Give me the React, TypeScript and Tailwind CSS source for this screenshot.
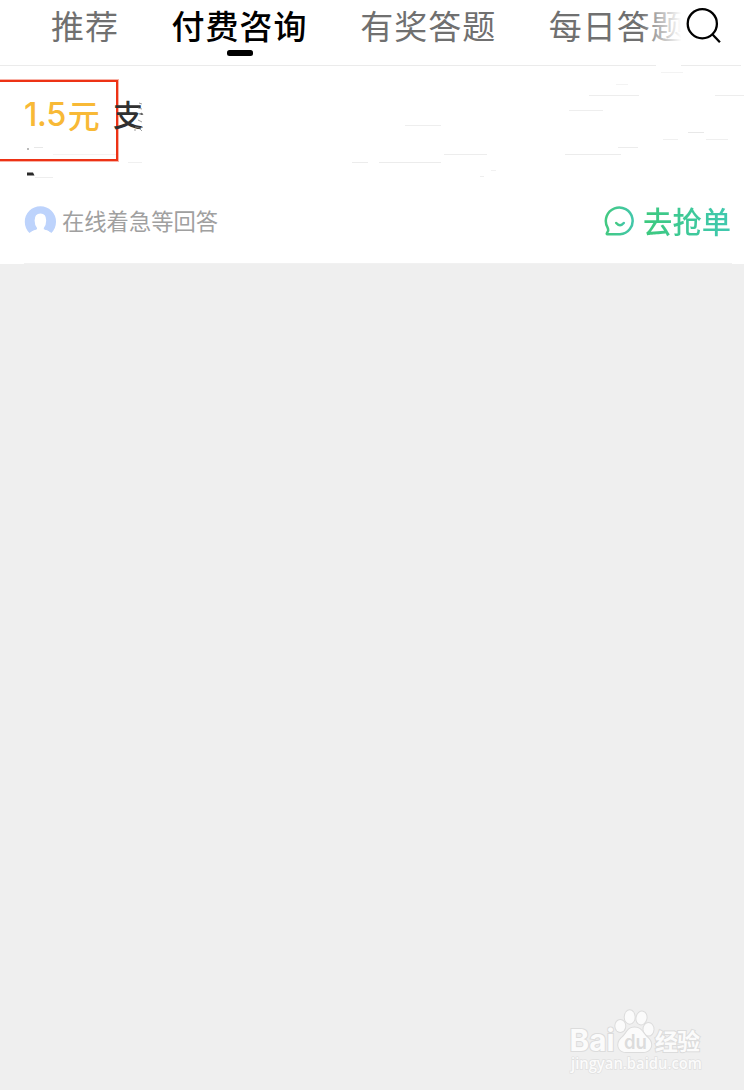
const tabs = ['推荐', '付费咨询', '有奖答题', '每日答题'];

// Faint dashes scattered over the question: [x, y, width, colour]
const dashes: [number, number, number, string][] = [
  [661, 72, 22, '#f3f3f3'],
  [616, 84, 12, '#f3f3f3'],
  [589, 95, 50, '#ededed'],
  [715, 95, 29, '#ededed'],
  [569, 110, 34, '#eeeeee'],
  [405, 125, 36, '#eeeeee'],
  [688, 132, 16, '#e8e8e8'],
  [663, 139, 15, '#f0f0f0'],
  [706, 139, 22, '#efefef'],
  [618, 147, 20, '#ececec'],
  [444, 154, 43, '#ededed'],
  [565, 154, 56, '#ececec'],
  [352, 162, 16, '#ececec'],
  [379, 162, 62, '#ececec'],
  [480, 176, 4, '#eeeeee'],
  [491, 170, 5, '#f1f1f1'],
  [128, 162, 14, '#f0f0f0'],
  [34, 147, 9, '#e8e8e8'],
  [53, 154, 63, '#f3f3f3'],
  [35, 177, 18, '#eeeeee'],
];

function Tabs() {
  return (
    <header className="relative flex h-[66px] shrink-0 overflow-hidden pl-[51px] pt-[3px]">
      <nav className="flex gap-[52.6px] whitespace-nowrap text-[33px] leading-[44px] tracking-[1px] text-[#707070]">
        {tabs.map((tab) => (
          <div
            key={tab}
            className={
              tab === '付费咨询'
                ? 'flex flex-col items-center font-medium text-black'
                : 'flex flex-col items-center'
            }
          >
            <span>{tab}</span>
            {tab === '付费咨询' && <span className="mt-[3px] h-1.5 w-[26px] rounded-[2.5px] bg-black" />}
          </div>
        ))}
      </nav>
      <div className="absolute right-0 top-0 flex h-[64px] w-[104px] bg-linear-to-r from-white/0 from-0% via-white via-40% to-white">
        <svg className="ml-[46px] mt-[7px]" width="36" height="38" viewBox="0 0 36 38" fill="none" stroke="#000" strokeWidth="2.3">
          <circle cx="16.3" cy="16.7" r="14.6" />
          <path d="M26.1 27 33.9 35.2" />
        </svg>
      </div>
      <svg className="absolute left-0 top-[65px]" width="744" height="1">
        <path d="M0 .5H656M681 .5H741" stroke="#ebebeb" />
      </svg>
    </header>
  );
}

function Question() {
  return (
    <article className="relative h-[198px] shrink-0 bg-white">
      <h1 className="flex h-[96px] items-start text-[30px] leading-[40px]">
        <div className="mt-[14px] flex h-[81px] w-[118px] border-2 border-l-0 border-[#ed3215] pl-[24px] pt-[13px] font-medium text-[#f8b936] shadow-[0_0_0_1px_#ed321560]">
          <span className="mr-[2px] font-['Inter','Noto_Sans_CJK_SC',sans-serif] text-[32.5px] tracking-[-0.4px]">1.5</span>
          <span className="-mt-px text-[32px]">元</span>
        </div>
        <span className="-ml-[5px] mt-[27px] font-medium text-[#303030]">支</span>
      </h1>
      <footer className="mt-[34px] flex h-[50px] items-center justify-between pl-6 pr-[13px]">
        <div className="flex items-center">
          <svg className="-mt-[3px]" width="32" height="32" viewBox="0 0 32 32">
            <path d="M5.5 29A15.6 15.6 0 1 1 27.3 29Q24 26 20 25.5H12.5Q8 26.5 5.5 29Z" fill="#bdd3fc" />
            <path d="M6 29Q8 26.7 13 25.5V24Q10.6 21 10.6 16.5Q10.6 9.5 16.5 9.5Q22.2 9.5 22.2 16.5Q22.2 21 19.8 24V25.5Q24 26 27 29L24 32H8Z" fill="#fff" />
          </svg>
          <span className="-mt-[3px] ml-[6px] text-[22.3px] leading-[30px] text-[#a0a0a0]">在线着急等回答</span>
        </div>
        <button className="flex items-center">
          <svg width="32" height="32" viewBox="0 0 32 32" fill="none" stroke="url(#face)" strokeWidth="2.5" strokeLinecap="round" strokeLinejoin="round">
            <defs>
              <linearGradient id="face" x2="1">
                <stop stopColor="#43c982" />
                <stop offset="1" stopColor="#42c7a9" />
              </linearGradient>
            </defs>
            <path d="M3.5 22.4A13.4 13.4 0 1 1 16 29.3H3.4Q2.3 29.3 3 28L4.2 25.7Q4.3 24 3.5 22.4Z" />
            <path d="M12.2 18Q16 22.5 19.8 18" />
          </svg>
          <span className="-mt-[3px] ml-[7px] bg-linear-to-r from-[#3dc97d] to-[#40c8b0] bg-clip-text text-[29.3px] font-medium leading-[40px] text-transparent">去抢单</span>
        </button>
      </footer>
      <svg className="pointer-events-none absolute left-0 -top-[66px]" width="744" height="264">
        {dashes.map(([x, y, w, color]) => (
          <rect key={`${x}-${y}`} x={x} y={y} width={w} height="1" fill={color} />
        ))}
        <path d="M27 172.5h6l1.5 3h-7.5z" fill="#292929" />
        <path d="M27 149h2" stroke="#777" />
        <path d="M139 103l3 1M138 108l4 1M139 114l3-1 1 2M138 120l4 2M135 127l5 1 3-1M134 130h2M140 129l2 2" stroke="#888" strokeWidth=".8" />
        <path d="M24 263.5H732" stroke="#f1f1f1" />
      </svg>
    </article>
  );
}

function Watermark() {
  return (
    <svg className="mb-[13px] mr-[35px]" width="142" height="72" viewBox="0 0 142 72" fill="#fbfbfb" stroke="#dcdcdc" strokeWidth="2" paintOrder="stroke">
      <text x="2.5" y="45.5" fontFamily="Inter, sans-serif" fontWeight="700" fontSize="30" textLength="45" lengthAdjust="spacingAndGlyphs">Bai</text>
      <ellipse cx="53.3" cy="21" rx="5" ry="6" />
      <ellipse cx="62.7" cy="12" rx="5" ry="6.7" />
      <ellipse cx="74.5" cy="13" rx="5" ry="6.5" transform="rotate(12 74.5 13)" />
      <ellipse cx="81.5" cy="24.3" rx="5" ry="6.3" />
      <path d="M67.5 22.5C60 22.5 60 29 54.5 33C48.5 39 51.5 47 59 47C64 47 71 47 76 47C84 47 87 39 81 33C76 29 75 22.5 67.5 22.5Z" />
      <text x="57" y="43.5" fontFamily="Inter, sans-serif" fontWeight="600" fontSize="20" textLength="23" lengthAdjust="spacingAndGlyphs" fill="#dcdcdc" stroke="none">du</text>
      <text x="88" y="44.5" fontFamily="Noto Sans CJK SC, sans-serif" fontWeight="700" fontSize="23" textLength="45">经验</text>
      <text x="4" y="63.5" fontFamily="Open Sans, sans-serif" fontWeight="600" fontSize="15.5" textLength="131" lengthAdjust="spacingAndGlyphs" stroke="#e0e0e0" strokeWidth="1.4">jingyan.baidu.com</text>
    </svg>
  );
}

export default function App() {
  return (
    <div className="flex h-[1090px] w-[744px] flex-col overflow-hidden bg-white font-['Noto_Sans_CJK_SC',sans-serif]">
      <Tabs />
      <Question />
      <main className="flex flex-1 items-end justify-end bg-[#efefef]">
        <Watermark />
      </main>
    </div>
  );
}
